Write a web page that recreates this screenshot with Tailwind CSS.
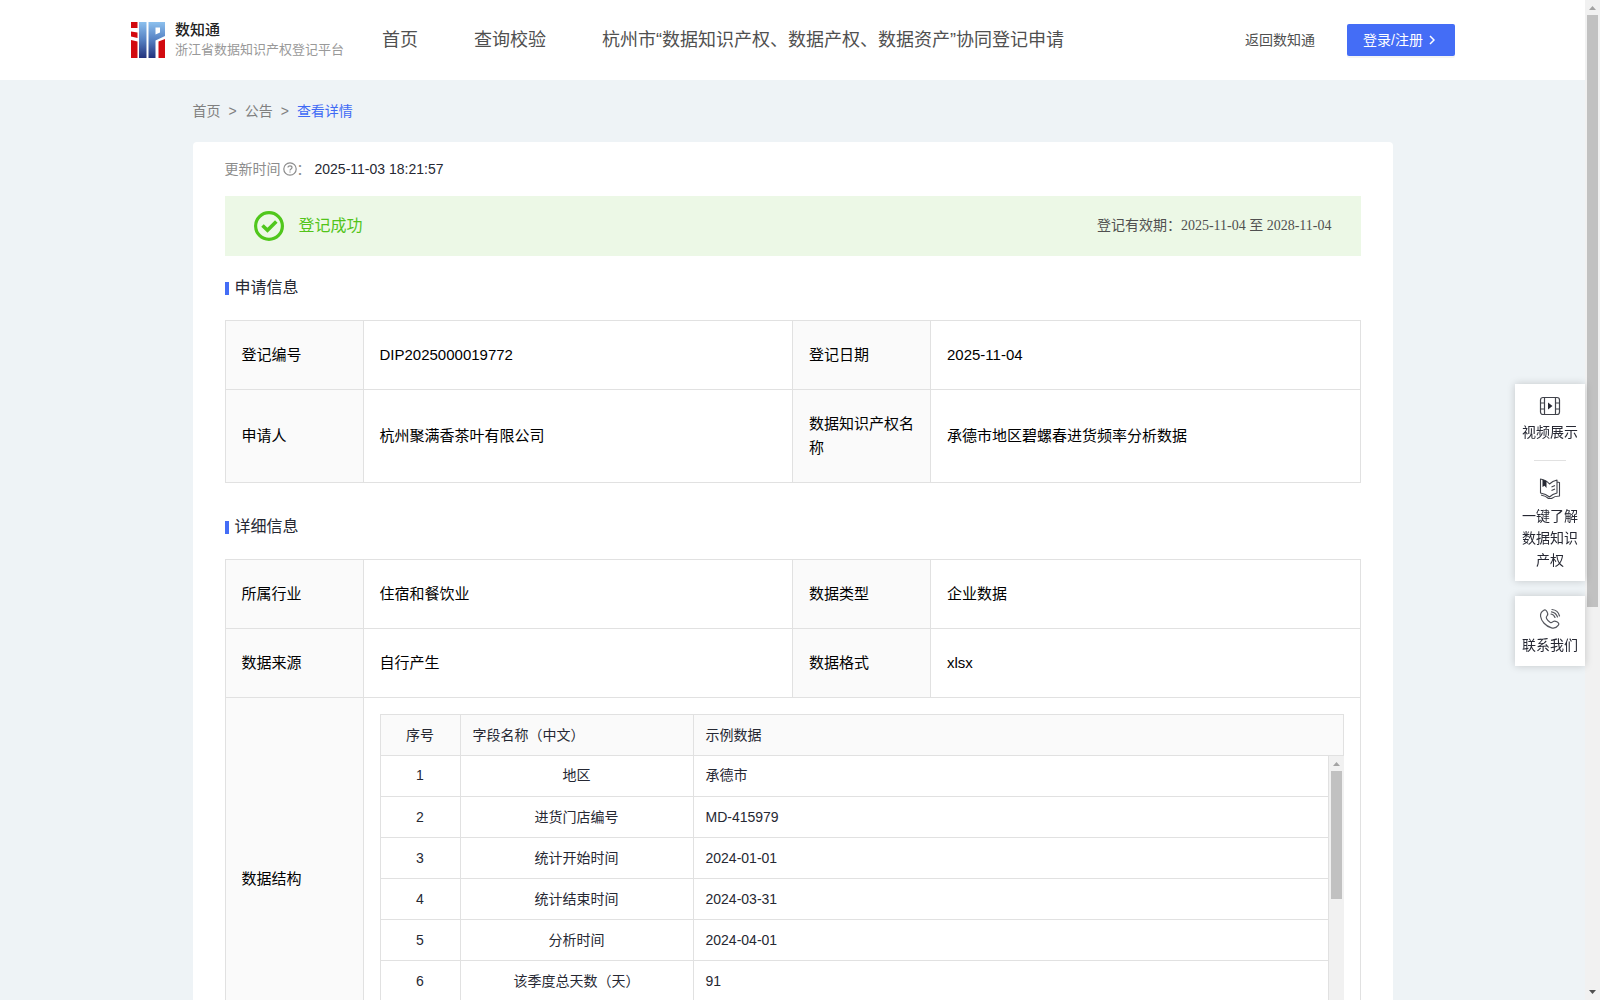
<!DOCTYPE html>
<html lang="zh-CN">
<head>
  <meta charset="UTF-8">
  <meta name="viewport" content="width=device-width, initial-scale=1.0">
  <title>数知通 - 查看详情</title>
  <script src="https://cdn.jsdelivr.net/npm/@tailwindcss/browser@4"></script>
</head>
<body class="flex h-screen overflow-hidden bg-[#eef3f6] font-['Liberation_Sans','Noto_Sans_CJK_SC',sans-serif] text-sm text-[#262833]">

<div class="min-w-0 flex-1 overflow-hidden">

  <!-- header -->
  <header class="flex h-20 items-center bg-white px-[130px] text-[#505050]">
    <a href="#" class="flex shrink-0 items-center gap-2.5">
      <svg class="h-9 w-[35px]" viewBox="0 0 35 36">
        <defs>
          <linearGradient id="blue" x1="0" y1="0" x2="0" y2="36" gradientUnits="userSpaceOnUse">
            <stop offset="0" stop-color="#8cc0ee"/>
            <stop offset="0.5" stop-color="#5580c2"/>
            <stop offset="1" stop-color="#22317c"/>
          </linearGradient>
        </defs>
        <path fill="#d20a10" d="M1 0h6.500v6H1zM1 9.500l6.500 1V16L1 14.500zM1 18l6.500 1.500V36H1zM28.500 19.500L35 17v19h-6.500z"/>
        <path fill="url(#blue)" d="M9 0h7.500v36H9zM18.500 0H35v14l-9.500 4.500V36h-7zM25.500 5.500v7l4.500-2v-5z" fill-rule="evenodd"/>
      </svg>
      <span class="flex flex-col whitespace-nowrap">
        <span class="text-[15px] leading-5 font-medium text-[#222]">数知通</span>
        <span class="text-[13px] leading-5 text-[#999]">浙江省数据知识产权登记平台</span>
      </span>
    </a>
    <nav class="ml-[38px] flex flex-1 gap-14 text-lg leading-6 whitespace-nowrap">
      <a href="#">首页</a>
      <a href="#">查询校验</a>
      <a href="#">杭州市“数据知识产权、数据产权、数据资产”协同登记申请</a>
    </nav>
    <a href="#" class="mr-8 shrink-0">返回数知通</a>
    <button type="button" class="flex h-8 w-[108px] shrink-0 items-center gap-1.5 rounded-xs bg-[#446df6] pl-4 whitespace-nowrap text-white shadow-[0_2px_0_rgba(0,0,0,0.045)]">
      登录/注册
      <svg class="h-2.5 w-1.5" viewBox="0 0 6 10" fill="none" stroke="currentColor" stroke-width="1.500"><path d="M1 1l4 4-4 4"/></svg>
    </button>
  </header>

  <main class="mx-auto w-full max-w-[1200px]">
    <nav class="flex h-[62px] items-center gap-2 text-[#808080]">
      <a href="#">首页</a><span>&gt;</span><a href="#">公告</a><span>&gt;</span><a href="#" class="text-[#3f6af5]">查看详情</a>
    </nav>

    <div class="rounded bg-white px-8 pt-4 pb-8">
      <div class="flex h-[22px] items-center">
        <span class="text-[#8c8c8c]">更新时间</span>
        <svg class="ml-0.5 size-3.5 text-[#8c8c8c]" viewBox="0 0 14 14" fill="none" stroke="currentColor" stroke-width="1.200">
          <circle cx="7" cy="7" r="6.200"/>
          <path d="M5 5.600C5 4.400 5.900 3.800 7 3.800s2 .7 2 1.700c0 1.400-2 1.400-2 2.900M7 9.400v1.200"/>
        </svg>
        <span class="text-[#8c8c8c]">：</span>
        <span class="ml-1">2025-11-03 18:21:57</span>
      </div>

      <div class="mt-4 flex h-[60px] items-center bg-[#ecf8e6] px-[29px]">
        <svg class="size-[30px]" viewBox="0 0 30 30" fill="none" stroke="#50c71c">
          <circle cx="15" cy="15" r="13.400" stroke-width="3.200"/>
          <path d="M8.500 14.500l5 4.800 8.800-8.800" stroke-width="3.600"/>
        </svg>
        <span class="ml-[15px] flex-1 text-base text-[#52c41a]">登记成功</span>
        <span class="font-['Liberation_Serif','Noto_Sans_CJK_SC',serif] text-[#505050]">登记有效期：2025-11-04 至 2028-11-04</span>
      </div>

      <h2 class="mt-5 mb-5 flex items-center gap-1.5 text-base"><span class="h-[13px] w-1 bg-[#446df6]"></span>申请信息</h2>

      <table class="w-full table-fixed border-collapse text-left text-[15px] leading-6 text-black">
        <colgroup><col class="w-[138px]"><col><col class="w-[138px]"><col></colgroup>
        <tr class="h-[69px]">
          <th scope="row" class="border border-[#e1e1e1] bg-[#fafafa] px-4 font-normal">登记编号</th>
          <td class="border border-[#e1e1e1] px-4">DIP2025000019772</td>
          <th scope="row" class="border border-[#e1e1e1] bg-[#fafafa] px-4 font-normal">登记日期</th>
          <td class="border border-[#e1e1e1] px-4">2025-11-04</td>
        </tr>
        <tr class="h-[93px]">
          <th scope="row" class="border border-[#e1e1e1] bg-[#fafafa] px-4 font-normal">申请人</th>
          <td class="border border-[#e1e1e1] px-4">杭州聚满香茶叶有限公司</td>
          <th scope="row" class="border border-[#e1e1e1] bg-[#fafafa] px-4 font-normal">数据知识产权名称</th>
          <td class="border border-[#e1e1e1] px-4">承德市地区碧螺春进货频率分析数据</td>
        </tr>
      </table>

      <h2 class="mt-8 mb-5 flex items-center gap-1.5 text-base"><span class="h-[13px] w-1 bg-[#446df6]"></span>详细信息</h2>

      <table class="w-full table-fixed border-collapse text-left text-[15px] leading-6 text-black">
        <colgroup><col class="w-[138px]"><col><col class="w-[138px]"><col></colgroup>
        <tr class="h-[69px]">
          <th scope="row" class="border border-[#e1e1e1] bg-[#fafafa] px-4 font-normal">所属行业</th>
          <td class="border border-[#e1e1e1] px-4">住宿和餐饮业</td>
          <th scope="row" class="border border-[#e1e1e1] bg-[#fafafa] px-4 font-normal">数据类型</th>
          <td class="border border-[#e1e1e1] px-4">企业数据</td>
        </tr>
        <tr class="h-[69px]">
          <th scope="row" class="border border-[#e1e1e1] bg-[#fafafa] px-4 font-normal">数据来源</th>
          <td class="border border-[#e1e1e1] px-4">自行产生</td>
          <th scope="row" class="border border-[#e1e1e1] bg-[#fafafa] px-4 font-normal">数据格式</th>
          <td class="border border-[#e1e1e1] px-4">xlsx</td>
        </tr>
        <tr>
          <th scope="row" class="border border-[#e1e1e1] bg-[#fafafa] px-4 font-normal">数据结构</th>
          <td colspan="3" class="border border-[#e1e1e1] p-4">
            <table class="w-full table-fixed border-collapse text-sm text-[#262833]">
              <tr class="h-[41px] bg-[#fafafa]">
                <th class="w-20 border border-[#e1e1e1] text-center font-normal">序号</th>
                <th class="w-[233px] border border-[#e1e1e1] px-3 font-normal">字段名称（中文）</th>
                <th class="border border-[#e1e1e1] px-3 font-normal">示例数据</th>
              </tr>
            </table>
            <div class="flex h-[287px] overflow-hidden">
              <table class="-mt-px flex-1 table-fixed border-collapse self-start text-sm text-[#262833]">
                <tbody id="fieldRows"></tbody>
              </table>
              <div class="flex w-[15px] flex-col items-center bg-[#f1f1f1] pt-1.5">
                <svg class="h-1 w-[7px]" viewBox="0 0 7 4"><path fill="#a3a3a3" d="M3.500 0L7 4H0z"/></svg>
                <div class="mt-[5px] h-32 w-[11px] bg-[#c1c1c1]"></div>
              </div>
            </div>
          </td>
        </tr>
      </table>
    </div>
  </main>
</div>

<!-- side tools -->
<aside class="fixed top-96 right-[15px] flex w-[70px] flex-col gap-[15px] text-center leading-[22px]">
  <div class="flex flex-col items-center bg-white pt-3 pb-2.5 shadow-[0_0_8px_rgba(0,0,0,0.18)]">
    <a href="#" class="flex flex-col items-center gap-[5px]">
      <svg class="h-5 w-[22px]" viewBox="0 0 22 20" fill="none" stroke="#41434b" stroke-width="1.200">
        <rect x="1.500" y="1.500" width="19" height="17" rx="2.500"/>
        <path d="M5.500 1.500v17M16.500 1.500v17M1.500 7h4M1.500 13h4M16.500 7h4M16.500 13h4"/>
        <path d="M9 6.500v7l4.500-3.500z" fill="#262833" stroke="none"/>
      </svg>
      视频展示
    </a>
    <div class="mt-[17px] mb-4 h-px w-8 bg-[#e1e1e1]"></div>
    <a href="#" class="flex flex-col items-center gap-[5px] px-[7px]">
      <svg class="h-[23px] w-[22px]" viewBox="0 0 22 22" fill="none" stroke="#41434b" stroke-width="1.100" stroke-linejoin="round">
        <path d="M1.500 1.500Q7 2.500 10.500 6.500Q13.500 3.500 18 2.500v13Q13.500 16.500 10.500 19.500Q7 16.500 1.500 15.500zM18 4.500l2.500 .5v13.500Q15.500 18.500 12.500 21M2 17.500Q7 18.500 9.500 21h3M12.500 9.500l3.500-1.500M12.500 13l3.500-1.500"/>
        <path d="M3.500 2v7.500l2-1.300 2 2.300V3.500z" fill="#262833" stroke="none"/>
      </svg>
      一键了解数据知识产权
    </a>
  </div>
  <div class="bg-white pt-3 pb-2.5 shadow-[0_0_8px_rgba(0,0,0,0.18)]">
    <a href="#" class="flex flex-col items-center gap-1">
      <svg class="h-[22px] w-[22px]" viewBox="0 0 22 22" fill="none" stroke="#55575e" stroke-width="1.200" stroke-linecap="round" stroke-linejoin="round">
        <path d="M4.500 2.500C6 1.300 7 2 8 3.800c1 1.800 1.200 2.800.2 3.800-1.200 1.200-1.400 1.500-.7 2.900.8 1.600 2.200 3 3.800 3.900 1.200.7 1.700.4 2.800-.7 1-1 2-.9 3.800.1 1.900 1.100 2.500 2 1.300 3.500-1.600 2.300-3.700 3.200-6.700 2.500C6.500 18.300 2.300 13 1.600 8.500 1.200 5.700 2.200 3.900 4.500 2.500z"/>
        <path d="M12 6q3 .5 4 3.500M12.500 3.800q4.500 .7 6 5.200M13 1.500q6 .5 7.500 6.500"/>
      </svg>
      联系我们
    </a>
  </div>
</aside>

<!-- page scrollbar -->
<div class="flex w-[15px] shrink-0 flex-col items-center bg-[#f1f1f1] py-1.5">
  <svg class="h-1 w-[7px] shrink-0" viewBox="0 0 7 4"><path fill="#a3a3a3" d="M3.500 0L7 4H0z"/></svg>
  <div class="my-[5px] flex-1"><div class="h-[61%] w-[11px] bg-[#c1c1c1]"></div></div>
  <svg class="h-1 w-[7px] shrink-0" viewBox="0 0 7 4"><path fill="#505050" d="M3.500 4L0 0h7z"/></svg>
</div>

<script>
const fields = [
  ["地区", "承德市"],
  ["进货门店编号", "MD-415979"],
  ["统计开始时间", "2024-01-01"],
  ["统计结束时间", "2024-03-31"],
  ["分析时间", "2024-04-01"],
  ["该季度总天数（天）", "91"]
];

document.getElementById("fieldRows").innerHTML = fields.map(([name, sample], i) => `
  <tr class="h-[41px]">
    <td class="w-20 border border-t-0 border-[#e1e1e1] text-center">${i + 1}</td>
    <td class="w-[233px] border border-t-0 border-[#e1e1e1] px-3 text-center">${name}</td>
    <td class="border border-t-0 border-[#e1e1e1] px-3">${sample}</td>
  </tr>
`).join("");
</script>
</body>
</html>
